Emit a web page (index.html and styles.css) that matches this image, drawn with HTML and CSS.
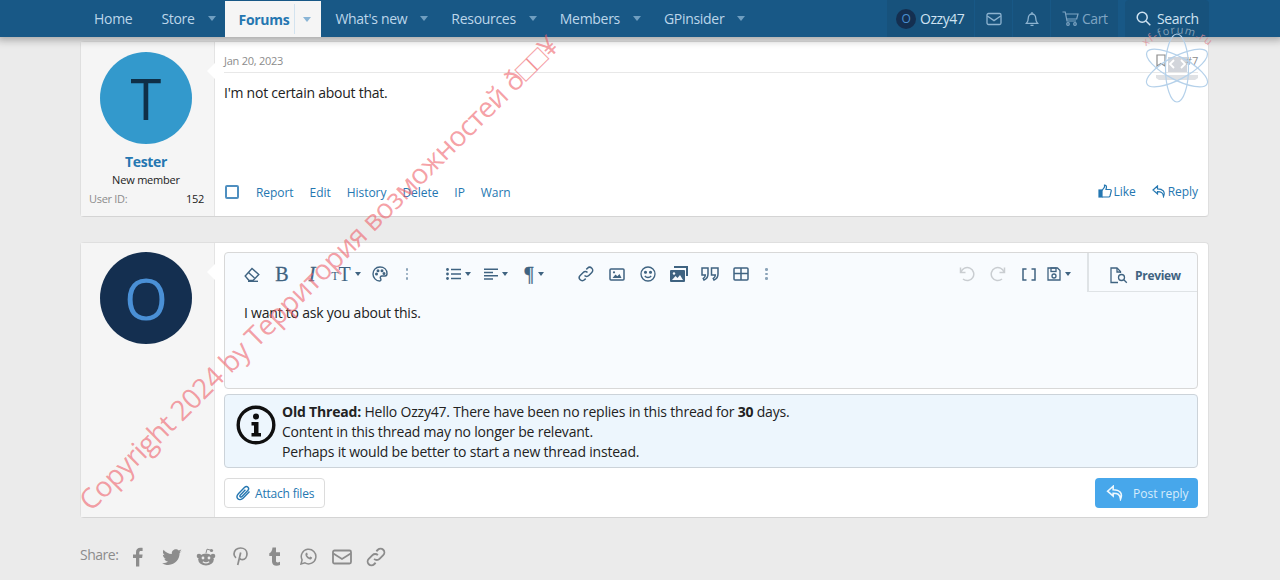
FILE: index.html
```html
<!DOCTYPE html>
<html>
<head>
	<meta charset="UTF-8">
	<title>Forum thread</title>
	<link rel="stylesheet" href="styles.css">
</head>
<body>
	<div class="nav">
		<div class="nav-inner">
			<a class="nav-link nav-plain">Home</a>
			<a class="nav-link">Store<i class="caret"></i></a>
			<a class="nav-link nav-active">Forums<span class="tab-split"></span><i class="caret"></i></a>
			<a class="nav-link">What's new<i class="caret"></i></a>
			<a class="nav-link">Resources<i class="caret"></i></a>
			<a class="nav-link">Members<i class="caret"></i></a>
			<a class="nav-link">GPinsider<i class="caret"></i></a>
			<div class="nav-right">
				<a class="nav-user"><span class="mini-avatar">O</span>Ozzy47</a>
				<a class="nav-icon">
					<svg width="16" height="14" viewBox="0 0 16 14" fill="none" stroke="currentColor" stroke-width="1.3"><rect x="1" y="1.5" width="14" height="11" rx="1.5"/><path d="M1.3 4l6.7 4.6L14.700 4"/></svg>
				</a>
				<a class="nav-icon">
					<svg width="14" height="16" viewBox="0 0 14 16" fill="none" stroke="currentColor" stroke-width="1.3"><path d="M1.500 12.300c1.400-1.600 1.800-3 1.800-5.300 0-2.300 1.600-4 3.700-4s3.700 1.700 3.700 4c0 2.300.4 3.700 1.800 5.300z"/><path d="M5.500 14.300h3M7 1v2"/></svg>
				</a>
				<a class="nav-cart">
					<svg width="17" height="15" viewBox="0 0 17 15" fill="none" stroke="currentColor" stroke-width="1.200"><path d="M.5 1h2.700l1.800 9h9M3.600 3h12.400l-1.300 5H4.600"/><circle cx="6" cy="13" r="1.300"/><circle cx="13" cy="13" r="1.300"/></svg>
					Cart
				</a>
			</div>
			<a class="nav-search">
				<svg width="15" height="15" viewBox="0 0 15 15" fill="none" stroke="currentColor" stroke-width="1.500"><circle cx="6.200" cy="6.200" r="5"/><path d="M10 10l4.300 4.300"/></svg>
				Search
			</a>
		</div>
	</div>

	<div class="page">
		<div class="card post-first">
			<div class="user-cell">
				<div class="avatar avatar-t">T</div>
				<div class="user-name">Tester</div>
				<div class="user-title">New member</div>
				<div class="user-stat"><span>User ID:</span><b>152</b></div>
			</div>
			<div class="post-main">
				<div class="post-head">
					<span class="post-date">Jan 20, 2023</span>
					<span class="post-num">
						<svg width="10" height="13" viewBox="0 0 10 13" fill="none" stroke="currentColor" stroke-width="1.200"><path d="M1 1h8v11L5 9.500 1 12z"/></svg>
						#7
					</span>
				</div>
				<div class="post-body">I'm not certain about that.</div>
				<div class="post-foot">
					<span class="checkbox"></span>
					<a>Report</a><a>Edit</a><a>History</a><a>Delete</a><a>IP</a><a>Warn</a>
					<span class="post-foot-right">
						<a class="foot-icon">
							<svg width="14" height="14" viewBox="0 0 14 14" fill="none" stroke="currentColor" stroke-width="1.200"><rect x="1" y="6" width="3" height="7" fill="currentColor"/><path d="M4 6.500L6.500 3V1c1.500 0 2 1 2 2.200L8 5.500h4c1 0 1.500.8 1.200 1.700l-1.200 4.800c-.2.700-.7 1-1.300 1H4"/></svg>
							Like
						</a>
						<a class="foot-icon">
							<svg width="14" height="13" viewBox="0 0 14 13" fill="none" stroke="currentColor" stroke-width="1.200"><path d="M5.500 1L1 5l4.500 4V6.700c3.500 0 5.500.6 6 4.800 2-4.500-.5-7.700-6-7.700z"/></svg>
							Reply
						</a>
					</span>
				</div>
			</div>
		</div>

		<div class="card post-reply">
			<div class="user-cell">
				<div class="avatar avatar-o">O</div>
			</div>
			<div class="post-main">
				<div class="editor">
					<div class="toolbar">
						<span class="tool"><svg width="16" height="15" viewBox="0 0 16 15" fill="none" stroke="currentColor" stroke-width="1.400"><path d="M1.200 9l6.800-7.500L14.800 7.500 9 13.500H5z"/><path d="M4.500 5.500l6 5.500"/><path d="M4 14.300h10"/></svg></span>
						<span class="tool tool-text">B</span>
						<span class="tool tool-text tool-italic">I</span>
						<span class="tool tool-size"><small>T</small>T<i class="caret caret-dark"></i></span>
						<span class="tool"><svg width="16" height="16" viewBox="0 0 16 16" fill="none" stroke="currentColor" stroke-width="1.400"><path d="M8 1C3.500 1 1 4.300 1 8s3 7 6.500 7c1.700 0 1.700-1.500 1-2.500-.7-1.200 0-2.500 1.500-2.500h3c1.300 0 2-1 2-2.500C15 3.500 12 1 8 1z"/><circle cx="4.500" cy="8" r=".8"/><circle cx="6" cy="4.800" r=".8"/><circle cx="10" cy="4.800" r=".8"/><circle cx="12" cy="7.500" r=".8"/></svg></span>
						<span class="tool tool-dots"><i></i><i></i><i></i></span>
						<span class="tool-gap"></span>
						<span class="tool tool-wide"><svg width="15" height="12" viewBox="0 0 15 12" fill="currentColor"><circle cx="1.500" cy="1.500" r="1.400"/><circle cx="1.500" cy="6" r="1.400"/><circle cx="1.500" cy="10.500" r="1.400"/><path d="M5 .7h10v1.600H5zM5 5.200h10v1.600H5zM5 9.700h10v1.600H5z"/></svg><i class="caret caret-dark"></i></span>
						<span class="tool tool-wide"><svg width="14" height="12" viewBox="0 0 14 12" fill="currentColor"><path d="M0 .5h14V2H0zM0 3.800h9v1.500H0zM0 7h14v1.500H0zM0 10.200h9v1.500H0z"/></svg><i class="caret caret-dark"></i></span>
						<span class="tool tool-wide tool-text tool-para">¶<i class="caret caret-dark"></i></span>
						<span class="tool-gap tool-gap-small"></span>
						<span class="tool tool-31"><svg width="16" height="16" viewBox="0 0 16 16" fill="none" stroke="currentColor" stroke-width="1.500"><path d="M6.500 9.500a3 3 0 0 0 4.300 0l3-3a3 3 0 0 0-4.300-4.300L8.300 3.400"/><path d="M9.500 6.500a3 3 0 0 0-4.300 0l-3 3a3 3 0 0 0 4.300 4.300l1.200-1.200"/></svg></span>
						<span class="tool tool-31"><svg width="16" height="13" viewBox="0 0 16 13" fill="none" stroke="currentColor" stroke-width="1.500"><rect x="1" y="1" width="14" height="11" rx="1"/><path d="M3.500 10l3-3.500 1.800 1.800L10.500 6l2 4z" fill="currentColor" stroke="none"/><circle cx="5" cy="4.300" r="1.100" fill="currentColor" stroke="none"/></svg></span>
						<span class="tool tool-31"><svg width="16" height="16" viewBox="0 0 16 16" fill="none" stroke="currentColor" stroke-width="1.300"><circle cx="8" cy="8" r="7"/><circle cx="5.500" cy="6.300" r=".9" fill="currentColor"/><circle cx="10.500" cy="6.300" r=".9" fill="currentColor"/><path d="M4.800 10c1.600 2 4.800 2 6.400 0"/></svg></span>
						<span class="tool tool-31"><svg width="20" height="18" viewBox="0 0 20 18" fill="currentColor"><path d="M5 1h14v10h-2V3H5z"/><rect x="1" y="5" width="15" height="12" rx="1"/><path d="M3 15l3.500-4 2 2 2.500-3 3 5z" fill="#f8fbfe"/><circle cx="5" cy="8.500" r="1.200" fill="#f8fbfe"/></svg></span>
						<span class="tool tool-31"><svg width="18" height="14" viewBox="0 0 18 14" fill="none" stroke="currentColor" stroke-width="1.500"><path d="M1 1h6v6c0 3-1.500 5-4 6l-.7-1.500C3.800 10.700 4.300 9.500 4.300 8H1z"/><path d="M10.500 1h6.500v6c0 3-1.500 5-4 6l-.7-1.500c1.500-.8 2-2 2-3.500h-3.800z"/></svg></span>
						<span class="tool tool-31"><svg width="16" height="14" viewBox="0 0 16 14" fill="none" stroke="currentColor" stroke-width="1.500"><rect x="1" y="1" width="14" height="12" rx="1"/><path d="M1 6.500h14M8 1v12" /></svg></span>
						<span class="tool tool-dots tool-dots-end"><i></i><i></i><i></i></span>
						<span class="tool-spacer"></span>
						<span class="tool tool-31 tool-off"><svg width="16" height="16" viewBox="0 0 16 16" fill="none" stroke="currentColor" stroke-width="1.500"><path d="M1.500 1.500v5h5"/><path d="M2 6.300A6.500 6.500 0 1 1 4 13"/></svg></span>
						<span class="tool tool-31 tool-off"><svg width="16" height="16" viewBox="0 0 16 16" fill="none" stroke="currentColor" stroke-width="1.500"><path d="M14.500 1.500v5h-5"/><path d="M14 6.300A6.500 6.500 0 1 0 12 13"/></svg></span>
						<span class="tool tool-31"><svg width="14" height="13" viewBox="0 0 14 13" fill="none" stroke="currentColor" stroke-width="1.500"><path d="M4.500 1H1v11h3.500M9.500 1H13v11H9.500"/></svg></span>
						<span class="tool tool-save"><svg width="14" height="14" viewBox="0 0 14 14" fill="none" stroke="currentColor" stroke-width="1.300"><path d="M1 1h9.500L13 3.500V13H1z"/><rect x="4" y="1" width="5" height="3.500"/><circle cx="7" cy="9" r="2"/></svg><i class="caret caret-dark"></i></span>
						<span class="preview-tab">
							<svg width="18" height="17" viewBox="0 0 18 17" fill="none" stroke="currentColor" stroke-width="1.300"><path d="M8 15.500H1V1h6l3.500 3.500V6"/><path d="M7 1v4h3.500"/><circle cx="11.500" cy="10.500" r="3"/><path d="M13.800 12.800l3 3"/></svg>
							Preview
						</span>
					</div>
					<div class="editor-text">I want to ask you about this.</div>
				</div>
				<div class="notice">
					<svg class="notice-icon" width="40" height="40" viewBox="0 0 40 40"><circle cx="20" cy="20" r="17.800" fill="none" stroke="#0f0f0f" stroke-width="3.400"/><circle cx="20" cy="11.500" r="3" fill="#0f0f0f"/><path d="M15.500 17h7v11h2.500v3.500H15.500V28H18v-7.500h-2.500z" fill="#0f0f0f"/></svg>
					<div class="notice-text">
						<b>Old Thread:</b> Hello Ozzy47. There have been no replies in this thread for <b>30</b> days.<br>
						Content in this thread may no longer be relevant.<br>
						Perhaps it would be better to start a new thread instead.
					</div>
				</div>
				<div class="form-row">
					<a class="btn-attach">
						<svg width="15" height="16" viewBox="0 0 15 16" fill="none" stroke="currentColor" stroke-width="1.400"><path d="M13.500 6.500L7 13.200c-1.700 1.700-4 1.800-5.200.500s-1-3.200.6-4.900l6-6.200c1.200-1.200 2.700-1.300 3.600-.4s.8 2.300-.4 3.500L6 11.500c-.6.600-1.300.7-1.800.2s-.4-1.200.2-1.800l5-5.200"/></svg>
						Attach files
					</a>
					<a class="btn-post">
						<svg width="18" height="16" viewBox="0 0 14 13" fill="none" stroke="#eef7fd" stroke-width="1.300"><path d="M5.500 1L1 5l4.500 4V6.700c3.500 0 5.500.6 6 4.800 2-4.500-.5-7.700-6-7.700z"/></svg>
						Post reply
					</a>
				</div>
			</div>
		</div>

		<div class="share">
			<span class="share-label">Share:</span>
			<span class="share-icon"><svg width="18" height="20" viewBox="0 0 18 20" fill="currentColor"><path d="M7 19.500v-8.500H4V7.500h3V5.300C7 2.300 8.700.8 11.300.8c1.100 0 2 .1 2.300.1v3h-1.700c-1.300 0-1.600.7-1.600 1.600v2h3.300l-.5 3.500h-2.800v8.500z"/></svg></span>
			<span class="share-icon"><svg width="20" height="18" viewBox="0 0 20 18" fill="currentColor"><path d="M19.800 3.200c-.7.300-1.500.5-2.300.6.800-.5 1.500-1.300 1.800-2.200-.8.500-1.700.8-2.600 1C16 1.700 15 1.200 13.800 1.200c-2.600 0-4.500 2.400-3.900 4.900C6.500 6 3.500 4.300 1.500 1.800.4 3.600.9 6 2.700 7.200c-.7 0-1.300-.2-1.800-.5 0 1.900 1.300 3.600 3.200 4-.6.200-1.200.2-1.800.1.500 1.600 2 2.800 3.700 2.800-1.700 1.300-3.800 1.900-5.900 1.600 1.800 1.100 3.800 1.800 6.100 1.800 7.400 0 11.600-6.300 11.400-11.900.8-.6 1.500-1.200 2-2z"/></svg></span>
			<span class="share-icon"><svg width="20" height="18" viewBox="0 0 20 18" fill="currentColor"><circle cx="15.500" cy="2.500" r="1.600"/><path d="M10 5l1-3.800 4 1" fill="none" stroke="currentColor" stroke-width="1"/><circle cx="3" cy="8" r="2.300"/><circle cx="17" cy="8" r="2.300"/><ellipse cx="10" cy="11.500" rx="7.800" ry="6"/><circle cx="7" cy="10" r="1.400" fill="#ebebeb"/><circle cx="13" cy="10" r="1.400" fill="#ebebeb"/><path d="M6.800 13.800c2 1.400 4.400 1.400 6.400 0" fill="none" stroke="#ebebeb" stroke-width="1.100"/></svg></span>
			<span class="share-icon"><svg width="15" height="19" viewBox="0 0 15 19" fill="none" stroke="currentColor" stroke-width="1.700"><path d="M3 10.800C1.700 9.700 1 8.500 1 7c0-3.400 2.800-6 6.500-6C11.200 1 14 3.300 14 6.700c0 3.400-2 6-4.700 6-1.200 0-2.200-.6-2.500-1.500"/><path d="M7.700 5.500L4.700 18"/></svg></span>
			<span class="share-icon"><svg width="14" height="19" viewBox="0 0 14 19" fill="currentColor"><path d="M5.500.5h3.500v4.800h4V9H9v5c0 1.700 1.800 1.800 4 .8v3.200c-4 1.500-8 .6-8-3.500V9H2.300V6.200C4.200 5.500 5.300 3.500 5.500.5z"/></svg></span>
			<span class="share-icon"><svg width="17" height="17" viewBox="0 0 17 17" fill="none" stroke="currentColor" stroke-width="1.500"><path d="M1 16l1.100-4.100A7.300 7.300 0 1 1 5 14.900z"/><path d="M6 5c-1 1-.8 2.500.6 4.200 1.400 1.600 3.100 2.600 4.400 2 1-.5 1.200-1.200 1.100-1.700l-1.900-1-.8.900c-1-.4-1.800-1.200-2.300-2.200l.7-.8-.8-1.900z" fill="currentColor" stroke="none"/></svg></span>
			<span class="share-icon"><svg width="20" height="16" viewBox="0 0 20 16" fill="none" stroke="currentColor" stroke-width="1.800"><rect x="1" y="1.500" width="18" height="13" rx="1.500"/><path d="M1.300 4.500L10 10l8.700-5.500"/></svg></span>
			<span class="share-icon"><svg width="20" height="20" viewBox="0 0 16 16" fill="none" stroke="currentColor" stroke-width="1.500"><path d="M6.500 9.500a3 3 0 0 0 4.300 0l3-3a3 3 0 0 0-4.300-4.300L8.300 3.400"/><path d="M9.500 6.500a3 3 0 0 0-4.300 0l-3 3a3 3 0 0 0 4.300 4.300l1.200-1.200"/></svg></span>
		</div>
	</div>

	<div class="watermark">Copyright 2024 by Территория возможностей ð□□¥</div>

	<svg class="logo-mark" width="80" height="90" viewBox="0 0 80 90">
		<defs><path id="logo-arc" d="M5 33 A45 45 0 0 1 76 33"/></defs>
		<text class="logo-text" text-anchor="middle"><textPath href="#logo-arc" startOffset="50%"><tspan class="logo-red">xf-</tspan>forum<tspan class="logo-red">.ru</tspan></textPath></text>
		<g opacity=".75">
			<rect x="31" y="39" width="19" height="15" fill="#c4c8cf"/>
			<path d="M19 57h42v3l-3 2H22l-3-2z" fill="#d5d8dc"/>
			<path d="M37 42l-4 4 4 4M44 42l4 4-4 4" fill="none" stroke="#fff" stroke-width="1.800"/>
		</g>
		<g fill="none" stroke="#b5d1ea" stroke-width="1.200">
			<ellipse cx="40" cy="50" rx="11.500" ry="34"/>
			<ellipse cx="40" cy="50" rx="11.500" ry="34" transform="rotate(62 40 50)"/>
			<ellipse cx="40" cy="50" rx="11.500" ry="34" transform="rotate(-62 40 50)"/>
		</g>
	</svg>
</body>
</html>
```

FILE: styles.css
```css
* {
	box-sizing: border-box;
}
html, body {
	height: 100%;
}
body {
	margin: 0;
	background: #ebebeb;
	color: #222;
	font-family: "Open Sans", Arial, sans-serif;
	font-size: 13px;
	overflow: hidden;
	position: relative;
}
a {
	color: #2577b1;
	text-decoration: none;
}
svg {
	display: block;
	flex: none;
}
.caret {
	display: inline-block;
	width: 0;
	height: 0;
	border-left: 4.500px solid transparent;
	border-right: 4.500px solid transparent;
	border-top: 5px solid #6f9ec0;
}
.caret-dark {
	border-left-width: 3.500px;
	border-right-width: 3.500px;
	border-top: 4px solid #3f6381;
	margin-left: 4px;
}

/* top bar */
.nav {
	height: 37px;
	background: #185886;
	box-shadow: 0 0 8px 3px rgba(0, 0, 0, .3);
	position: relative;
	z-index: 2;
}
.nav-inner {
	display: flex;
	width: 1129px;
	height: 37px;
	margin-left: 80px;
	align-items: stretch;
}
.nav-link {
	display: flex;
	align-items: center;
	padding: 0 9px 0 14px;
	color: #bcd6ea;
	font-size: 14px;
	letter-spacing: -.3px;
}
.nav-plain {
	padding-right: 15px;
}
.nav-link .caret {
	margin-left: 13px;
}
.nav-active {
	background: #f5f5f5;
	color: #2577b1;
	font-weight: 700;
	height: 36px;
	margin-top: 1px;
	padding-right: 10px;
}
.nav-link.nav-active .caret {
	margin-left: 8px;
	border-top-color: #8ab5d6;
}
.tab-split {
	width: 1px;
	height: 30px;
	background: #d3e3ef;
	margin-left: 5px;
}
.nav-right {
	display: flex;
	margin-left: auto;
	background: #17527c;
	color: #9fbfd8;
}
.nav-user {
	display: flex;
	align-items: center;
	gap: 4px;
	width: 88px;
	padding-left: 9px;
	color: #cfe2f1;
	font-size: 14px;
	letter-spacing: -.45px;
	border-right: 1px solid #185886;
}
.mini-avatar {
	width: 20px;
	height: 20px;
	border-radius: 50%;
	background: #142f50;
	color: #4a90d0;
	font-size: 12px;
	text-align: center;
	line-height: 20px;
}
.nav-icon {
	display: flex;
	align-items: center;
	justify-content: center;
	width: 38px;
	color: #8db3d0;
	border-right: 1px solid #185886;
}
.nav-cart {
	display: flex;
	align-items: center;
	gap: 3px;
	width: 67px;
	padding-left: 11px;
	color: #7fa5c3;
	font-size: 14px;
	letter-spacing: -.45px;
}
.nav-search {
	display: flex;
	align-items: center;
	gap: 6px;
	width: 84px;
	margin-left: 7px;
	padding-left: 11px;
	background: #17527c;
	color: #cfe2f1;
	font-size: 14px;
	letter-spacing: -.45px;
	border-radius: 4px 4px 0 0;
}

/* posts */
.page {
	width: 1129px;
	margin-left: 80px;
}
.card {
	display: flex;
	background: #fff;
	border: 1px solid #dfdfdf;
	border-bottom-color: #d4d4d4;
	border-radius: 4px;
}
.post-first {
	height: 176px;
	margin-top: 4px;
}
.post-reply {
	height: 276px;
	margin-top: 25px;
}
.user-cell {
	position: relative;
	width: 134px;
	flex: none;
	padding: 10px 10px 0 7px;
	background: #f5f5f5;
	border-right: 1px solid #e4e4e4;
	text-align: center;
}
.post-reply .user-cell {
	padding-top: 9px;
}
.user-cell::after {
	content: "";
	position: absolute;
	right: -1px;
	top: 21px;
	border-top: 8px solid transparent;
	border-bottom: 8px solid transparent;
	border-right: 8px solid #fff;
}
.avatar {
	width: 92px;
	height: 92px;
	margin: 0 auto;
	border-radius: 50%;
	font-size: 56px;
	line-height: 92px;
	text-align: center;
}
.avatar-t {
	background: #3399cc;
	color: #0f2f47;
}
.avatar-o {
	background: #142f50;
	color: #4a90d6;
}
.user-name {
	margin-top: 8px;
	color: #2577b1;
	font-size: 14px;
	font-weight: 700;
	letter-spacing: -.3px;
	line-height: 19px;
}
.user-title {
	font-size: 11px;
	letter-spacing: -.2px;
	line-height: 18px;
}
.user-stat {
	display: flex;
	justify-content: space-between;
	margin: 1px 0 0 1px;
	color: #8c8c8c;
	font-size: 11px;
	letter-spacing: -.3px;
	line-height: 18px;
}
.user-stat b {
	color: #222;
	font-weight: 400;
}
.post-main {
	flex: 1;
	display: flex;
	flex-direction: column;
	padding: 10px 10px 9px 9px;
	min-width: 0;
}
.post-reply .post-main {
	padding-top: 9px;
}
.post-head {
	display: flex;
	justify-content: space-between;
	align-items: center;
	height: 21px;
	padding-bottom: 3px;
	color: #8c8c8c;
	font-size: 11px;
	letter-spacing: -.25px;
	border-bottom: 1px solid #e8e8e8;
}
.post-num {
	display: flex;
	align-items: center;
	gap: 19px;
}
.post-body {
	margin-top: 10px;
	font-size: 14px;
	letter-spacing: -.24px;
	line-height: 20px;
	color: #222;
}
.post-foot {
	display: flex;
	align-items: center;
	margin-top: auto;
	margin-bottom: 5px;
	height: 20px;
	font-size: 12px;
	letter-spacing: -.05px;
}
.post-foot a {
	margin-right: 16px;
}
.checkbox {
	width: 14px;
	height: 14px;
	margin: 0 17px 0 1px;
	border: 2px solid #4f8fc0;
	border-radius: 2px;
}
.post-foot-right {
	display: flex;
	margin: 0 0 2px auto;
}
.post-foot-right a {
	margin-right: 0;
	margin-left: 16px;
}
.foot-icon {
	display: flex;
	align-items: center;
	gap: 2px;
}

/* editor */
.editor {
	height: 138px;
	background: #f8fbfe;
	border: 1px solid #d8d8d8;
	border-radius: 4px;
}
.toolbar {
	display: flex;
	align-items: center;
	height: 39px;
	padding-left: 12px;
	color: #3f6381;
}
.tool {
	display: flex;
	align-items: center;
	justify-content: center;
	width: 30px;
	height: 30px;
	margin-top: 3px;
}
.tool-31 {
	width: 31px;
}
.tool-text {
	font-family: "Liberation Serif", serif;
	font-size: 20px;
	-webkit-text-stroke: .3px currentColor;
}
.tool-italic {
	font-style: italic;
}
.tool-size {
	width: 38px;
	font-family: "Liberation Serif", serif;
	font-size: 20px;
}
.tool-size small {
	font-size: 12px;
	margin-top: 4px;
}
.tool-wide {
	width: 38px;
}
.tool-dots {
	flex-direction: column;
	gap: 2px;
	width: 24px;
}
.tool-dots-end {
	width: 21px;
}
.tool-dots i {
	width: 2.500px;
	height: 2.500px;
	background: #8ba3b8;
	border-radius: 50%;
}
.tool-gap {
	width: 20px;
}
.tool-gap-small {
	width: 17px;
}
.tool-spacer {
	flex: 1;
}
.tool-off {
	color: #c9cdd1;
}
.tool-save {
	width: 29px;
}
.preview-tab {
	display: flex;
	align-items: center;
	gap: 7px;
	width: 110px;
	height: 39px;
	margin-left: 14px;
	padding: 7px 0 0 21px;
	border-left: 2px solid #dfe3e6;
	border-bottom: 1px solid #dfe3e6;
	font-size: 12px;
	font-weight: 700;
	letter-spacing: -.3px;
}
.editor-text {
	padding: 11px 19px;
	font-size: 14px;
	letter-spacing: -.22px;
	line-height: 20px;
	color: #222;
}
.notice {
	display: flex;
	align-items: flex-start;
	gap: 6px;
	height: 74px;
	margin-top: 5px;
	padding-left: 11px;
	background: #edf6fd;
	border: 1px solid #ccd3d9;
	border-radius: 4px;
}
.notice-icon {
	margin-top: 10px;
}
.notice-text {
	margin-top: 7px;
	font-size: 14px;
	letter-spacing: -.2px;
	line-height: 20px;
}
.form-row {
	display: flex;
	justify-content: space-between;
	margin-top: 10px;
}
.btn-attach, .btn-post {
	display: flex;
	align-items: center;
	height: 30px;
	font-size: 12px;
	border-radius: 4px;
}
.btn-attach {
	gap: 4px;
	width: 101px;
	padding-left: 11px;
	letter-spacing: -.2px;
	background: #fff;
	border: 1px solid #dcdcdc;
}
.btn-post {
	gap: 9px;
	width: 103px;
	padding-left: 11px;
	background: #47a7eb;
	color: #d6ecfb;
}
.share {
	display: flex;
	align-items: center;
	margin-top: 27px;
	color: #8c8c8c;
}
.share-label {
	width: 41px;
	margin-bottom: 4px;
	font-size: 14px;
	letter-spacing: -.5px;
}
.share-icon {
	display: flex;
	justify-content: center;
	width: 34px;
}

/* overlays */
.watermark {
	position: absolute;
	left: 70px;
	top: 491px;
	transform: rotate(-44.700deg);
	transform-origin: left top;
	color: rgba(238, 90, 100, .58);
	font-size: 28px;
	letter-spacing: -.6px;
	white-space: nowrap;
	z-index: 3;
}
.logo-mark {
	position: absolute;
	left: 1137px;
	top: 18px;
	z-index: 3;
}
.logo-text {
	fill: #9db2c4;
	font-size: 11px;
	letter-spacing: 1px;
	opacity: .8;
}
.logo-red {
	fill: #dc8c96;
}
```
